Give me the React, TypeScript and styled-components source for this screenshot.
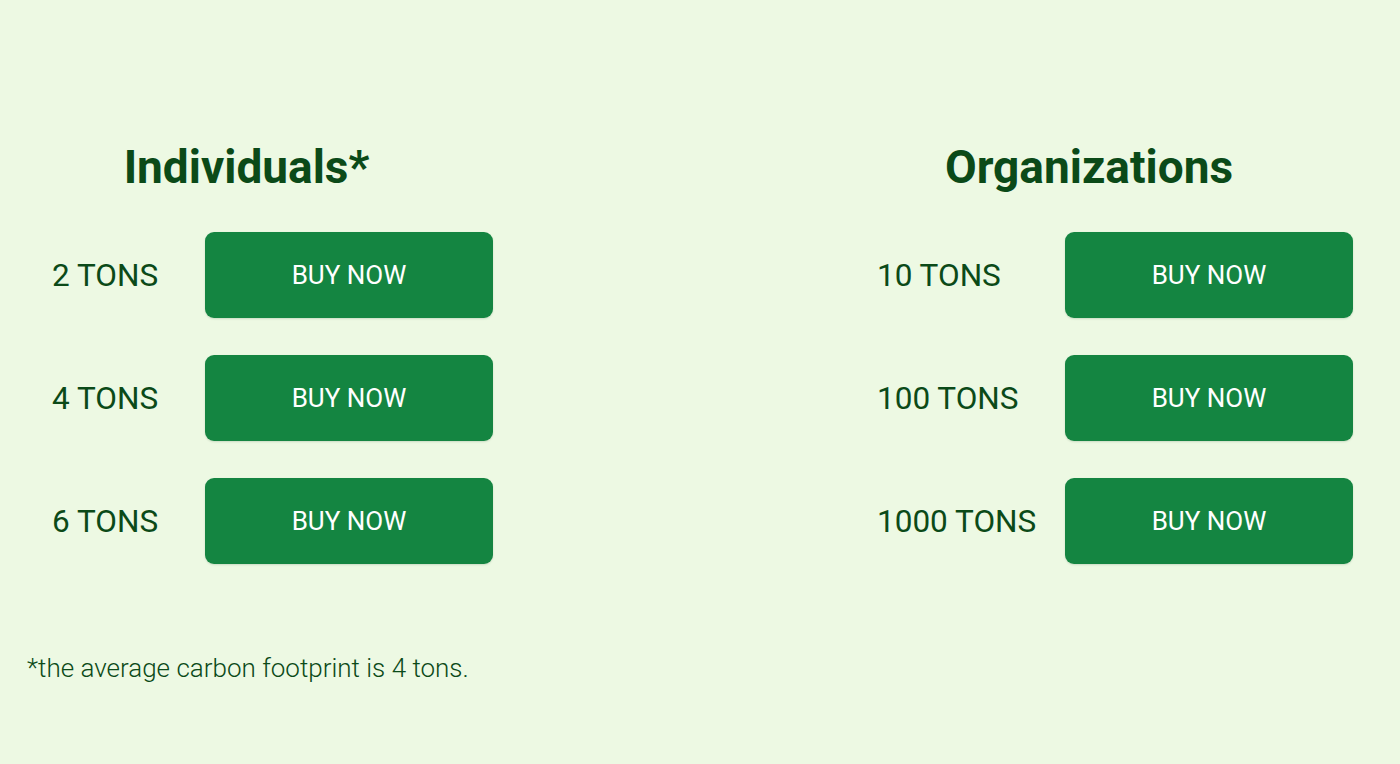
import React from "react";
import styled, { createGlobalStyle } from "styled-components";

const Global = createGlobalStyle`
  html, body { margin: 0; padding: 0; background: #edf9e3; }
  body { font-family: Roboto, "Noto Sans", sans-serif; color: #0b4a18; }
`;

const Page = styled.div`
  width: 1400px;
  height: 764px;
  box-sizing: border-box;
  padding: 137px 47px 0 0;
  display: flex;
  flex-direction: column;
`;

const Columns = styled.div`
  display: flex;
  justify-content: space-between;
`;

const Column = styled.section`
  display: flex;
  flex-direction: column;
`;

const Title = styled.h2`
  margin: 0 0 35px 0;
  text-align: center;
  font-size: 46px;
  line-height: 60px;
  font-weight: 700;
  color: #0b4a18;
`;

const Rows = styled.div`
  display: flex;
  flex-direction: column;
  gap: 37px;
  padding-left: 52px;
`;

const Row = styled.div`
  display: flex;
  align-items: center;
`;

const Label = styled.span<{ $w: number }>`
  width: ${(p) => p.$w}px;
  font-size: 31.5px;
  font-weight: 400;
  color: #0b4a18;
`;

const BuyButton = styled.button`
  width: 288px;
  height: 86px;
  border: none;
  border-radius: 9px;
  background: #148541;
  color: #ffffff;
  font-family: Roboto, "Noto Sans", sans-serif;
  font-size: 26px;
  font-weight: 400;
  box-shadow: 0 1px 2px rgba(0, 60, 20, 0.15);
  cursor: pointer;
  padding: 0;
`;

const Note = styled.p`
  margin: 89px 0 0 27px;
  font-size: 26px;
  font-weight: 300;
  color: #0b4a18;
`;

const groups = [
  { title: "Individuals*", w: 153, items: ["2 TONS", "4 TONS", "6 TONS"] },
  { title: "Organizations", w: 188, items: ["10 TONS", "100 TONS", "1000 TONS"] },
];

export default function App() {
  return (
    <>
      <Global />
      <Page>
        <Columns>
          {groups.map((g) => (
            <Column key={g.title}>
              <Title>{g.title}</Title>
              <Rows>
                {g.items.map((it) => (
                  <Row key={it}>
                    <Label $w={g.w}>{it}</Label>
                    <BuyButton>BUY NOW</BuyButton>
                  </Row>
                ))}
              </Rows>
            </Column>
          ))}
        </Columns>
        <Note>*the average carbon footprint is 4 tons.</Note>
      </Page>
    </>
  );
}
